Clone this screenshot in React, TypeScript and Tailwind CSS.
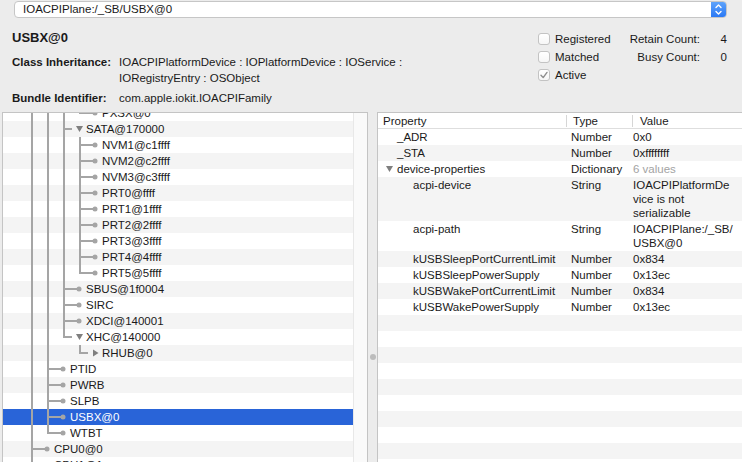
type Guide = "pass" | "none" | "tee" | "elbow"
type Kind = "leaf" | "open" | "closed"

type TreeItem = {
  label: string
  guides: Guide[]
  kind: Kind
  selected?: boolean
}

type PropItem = {
  name: string
  indent: 1 | 2
  open?: boolean
  type: string
  value: string[]
  muted?: boolean
}

const treeRows: TreeItem[] = [
  { label: "PXSX@0", guides: ["pass", "pass", "pass", "elbow"], kind: "leaf" },
  { label: "SATA@170000", guides: ["pass", "pass", "tee"], kind: "open" },
  { label: "NVM1@c1ffff", guides: ["pass", "pass", "pass", "tee"], kind: "leaf" },
  { label: "NVM2@c2ffff", guides: ["pass", "pass", "pass", "tee"], kind: "leaf" },
  { label: "NVM3@c3ffff", guides: ["pass", "pass", "pass", "tee"], kind: "leaf" },
  { label: "PRT0@ffff", guides: ["pass", "pass", "pass", "tee"], kind: "leaf" },
  { label: "PRT1@1ffff", guides: ["pass", "pass", "pass", "tee"], kind: "leaf" },
  { label: "PRT2@2ffff", guides: ["pass", "pass", "pass", "tee"], kind: "leaf" },
  { label: "PRT3@3ffff", guides: ["pass", "pass", "pass", "tee"], kind: "leaf" },
  { label: "PRT4@4ffff", guides: ["pass", "pass", "pass", "tee"], kind: "leaf" },
  { label: "PRT5@5ffff", guides: ["pass", "pass", "pass", "elbow"], kind: "leaf" },
  { label: "SBUS@1f0004", guides: ["pass", "pass", "tee"], kind: "leaf" },
  { label: "SIRC", guides: ["pass", "pass", "tee"], kind: "leaf" },
  { label: "XDCI@140001", guides: ["pass", "pass", "tee"], kind: "leaf" },
  { label: "XHC@140000", guides: ["pass", "pass", "elbow"], kind: "open" },
  { label: "RHUB@0", guides: ["pass", "pass", "none", "elbow"], kind: "closed" },
  { label: "PTID", guides: ["pass", "tee"], kind: "leaf" },
  { label: "PWRB", guides: ["pass", "tee"], kind: "leaf" },
  { label: "SLPB", guides: ["pass", "tee"], kind: "leaf" },
  { label: "USBX@0", guides: ["pass", "tee"], kind: "leaf", selected: true },
  { label: "WTBT", guides: ["pass", "elbow"], kind: "leaf" },
  { label: "CPU0@0", guides: ["tee"], kind: "leaf" },
  { label: "CPU1@1", guides: ["tee"], kind: "leaf" },
]

const properties: PropItem[] = [
  { name: "_ADR", indent: 1, type: "Number", value: ["0x0"] },
  { name: "_STA", indent: 1, type: "Number", value: ["0xffffffff"] },
  { name: "device-properties", indent: 1, open: true, type: "Dictionary", value: ["6 values"], muted: true },
  { name: "acpi-device", indent: 2, type: "String", value: ["IOACPIPlatformDe", "vice is not", "serializable"] },
  { name: "acpi-path", indent: 2, type: "String", value: ["IOACPIPlane:/_SB/", "USBX@0"] },
  { name: "kUSBSleepPortCurrentLimit", indent: 2, type: "Number", value: ["0x834"] },
  { name: "kUSBSleepPowerSupply", indent: 2, type: "Number", value: ["0x13ec"] },
  { name: "kUSBWakePortCurrentLimit", indent: 2, type: "Number", value: ["0x834"] },
  { name: "kUSBWakePowerSupply", indent: 2, type: "Number", value: ["0x13ec"] },
]

const LINE = "#a5a5a5"

export default function App() {
  return (
    <div className="h-[462px] w-[742px] overflow-hidden bg-[#ececec] font-['Liberation_Sans',Arial,sans-serif] text-[11.5px] text-[#1a1a1a]">
      {/* path combo box */}
      <div className="pl-[14px] pr-[15px] pt-px">
        <div className="flex h-[17px] overflow-hidden rounded-[4px] border border-[#c6c6c6] bg-white">
          <span className="flex flex-1 items-center pl-[8px] leading-none">IOACPIPlane:/_SB/USBX@0</span>
          <span className="flex w-[15px] items-center justify-center bg-[linear-gradient(#5ea3fb,#2b79f5)]">
            <svg width="9" height="13" viewBox="0 0 9 13" fill="none" stroke="white" strokeWidth="1.4" strokeLinecap="round" strokeLinejoin="round">
              <path d="M2 4.5 L4.5 2 L7 4.5" />
              <path d="M2 8.5 L4.5 11 L7 8.5" />
            </svg>
          </span>
        </div>
      </div>

      {/* object summary */}
      <div className="mt-[12px] flex">
        <div className="w-[538px] pl-[12px]">
          <div className="h-4 text-[13px] font-bold leading-4">USBX@0</div>
          <div className="mt-[8px] flex leading-4">
            <div className="w-[107px] shrink-0 font-bold">Class Inheritance:</div>
            <div>
              IOACPIPlatformDevice : IOPlatformDevice : IOService :
              <br />
              IORegistryEntry : OSObject
            </div>
          </div>
          <div className="mt-[4px] flex leading-4">
            <div className="w-[107px] shrink-0 font-bold">Bundle Identifier:</div>
            <div>com.apple.iokit.IOACPIFamily</div>
          </div>
        </div>

        <div className="grid auto-rows-[18px] grid-cols-[82px_80px_27px] items-center leading-4">
          <Check label="Registered" />
          <div className="text-right">Retain Count:</div>
          <div className="text-right">4</div>
          <Check label="Matched" />
          <div className="text-right">Busy Count:</div>
          <div className="text-right">0</div>
          <Check label="Active" checked />
          <div />
          <div />
        </div>
      </div>

      {/* panes */}
      <div className="mt-[6px] flex h-[350px] pl-[2px]">
        <div className="flex w-[366px] shrink-0 border border-b-0 border-[#c4c4c4] bg-white">
          <div className="w-[350px] overflow-hidden">
            <div className="-mt-[8px]">
              {treeRows.map((row, i) => (
                <TreeRow key={row.label} row={row} index={i} />
              ))}
            </div>
          </div>
          <div className="w-[14px] border-l border-[#e8e8e8] bg-[#fafafa]" />
        </div>

        <div className="flex w-[9px] shrink-0 justify-center pt-[242px]">
          <div className="h-[6px] w-[6px] rounded-full bg-[#bcbcbc]" />
        </div>

        <div className="flex-1 overflow-hidden border-l border-t border-[#c4c4c4] bg-white">
          <div className="flex h-4 items-center border-b border-[#dedede] leading-[14px]">
            <div className="w-[188px] shrink-0 pl-[5px]">Property</div>
            <div className="h-[12px] w-px shrink-0 bg-[#d6d6d6]" />
            <div className="w-[65px] shrink-0 pl-[6px]">Type</div>
            <div className="h-[12px] w-px shrink-0 bg-[#d6d6d6]" />
            <div className="pl-[7px]">Value</div>
          </div>
          {properties.map((p, i) => (
            <PropRow key={p.name} item={p} index={i} />
          ))}
          {Array.from({ length: 10 }).map((_, i) => (
            <div key={i} className={(properties.length + i) % 2 === 1 ? "h-4 bg-[#f4f4f4]" : "h-4 bg-white"} />
          ))}
        </div>
      </div>
    </div>
  )
}

function Check({ label, checked }: { label: string; checked?: boolean }) {
  return (
    <div className="flex items-center gap-[5px]">
      <span className="flex h-[12px] w-[12px] items-center justify-center rounded-[3px] border border-[#c3c3c3] bg-[linear-gradient(#ffffff,#f6f6f6)]">
        {checked && (
          <svg width="10" height="10" viewBox="0 0 10 10" fill="none" stroke="#8e8e8e" strokeWidth="1.4" strokeLinecap="round" strokeLinejoin="round">
            <path d="M2 5.2 L4.2 7.6 L8 2.4" />
          </svg>
        )}
      </span>
      <span>{label}</span>
    </div>
  )
}

function GuideCell({ type }: { type: Guide }) {
  return (
    <svg width="16" height="16" className="shrink-0">
      {type !== "none" && <rect x="7" y="0" width="2" height={type === "elbow" ? 9 : 16} fill={LINE} />}
      {(type === "tee" || type === "elbow") && <rect x="7" y="7" width="9" height="2" fill={LINE} />}
    </svg>
  )
}

function NodeMark({ kind }: { kind: Kind }) {
  return (
    <svg width="14" height="16" className="shrink-0">
      {kind === "leaf" && (
        <>
          <rect x="0" y="7" width="6" height="2" fill={LINE} />
          <circle cx="7" cy="8" r="2.5" fill={LINE} />
        </>
      )}
      {kind === "open" && <polygon points="4,5 11,5 7.5,11" fill="#7f7f7f" />}
      {kind === "closed" && <polygon points="5,4.5 10.5,8 5,11.5" fill="#7f7f7f" />}
    </svg>
  )
}

function TreeRow({ row, index }: { row: TreeItem; index: number }) {
  const bg = row.selected ? "bg-[#2964d8] text-white" : index % 2 === 1 ? "bg-[#f4f4f4]" : "bg-white"
  return (
    <div className={`flex h-4 items-center pl-[21px] leading-4 whitespace-nowrap ${bg}`}>
      {row.guides.map((g, i) => (
        <GuideCell key={i} type={g} />
      ))}
      <NodeMark kind={row.kind} />
      <span>{row.label}</span>
    </div>
  )
}

function PropRow({ item, index }: { item: PropItem; index: number }) {
  const bg = index % 2 === 1 ? "bg-[#f4f4f4]" : "bg-white"
  return (
    <div className={`flex py-px leading-[14px] ${bg}`}>
      <div className={item.open ? "flex w-[189px] shrink-0 pl-[8px]" : item.indent === 1 ? "w-[189px] shrink-0 pl-[19px]" : "w-[189px] shrink-0 pl-[35px]"}>
        {item.open && (
          <svg width="11" height="14" className="shrink-0">
            <polygon points="0,4 7,4 3.5,10" fill="#7f7f7f" />
          </svg>
        )}
        <span>{item.name}</span>
      </div>
      <div className="w-[66px] shrink-0 pl-[4px]">{item.type}</div>
      <div className={item.muted ? "text-[#a3a3a3]" : ""}>
        {item.value.map((line) => (
          <div key={line}>{line}</div>
        ))}
      </div>
    </div>
  )
}
